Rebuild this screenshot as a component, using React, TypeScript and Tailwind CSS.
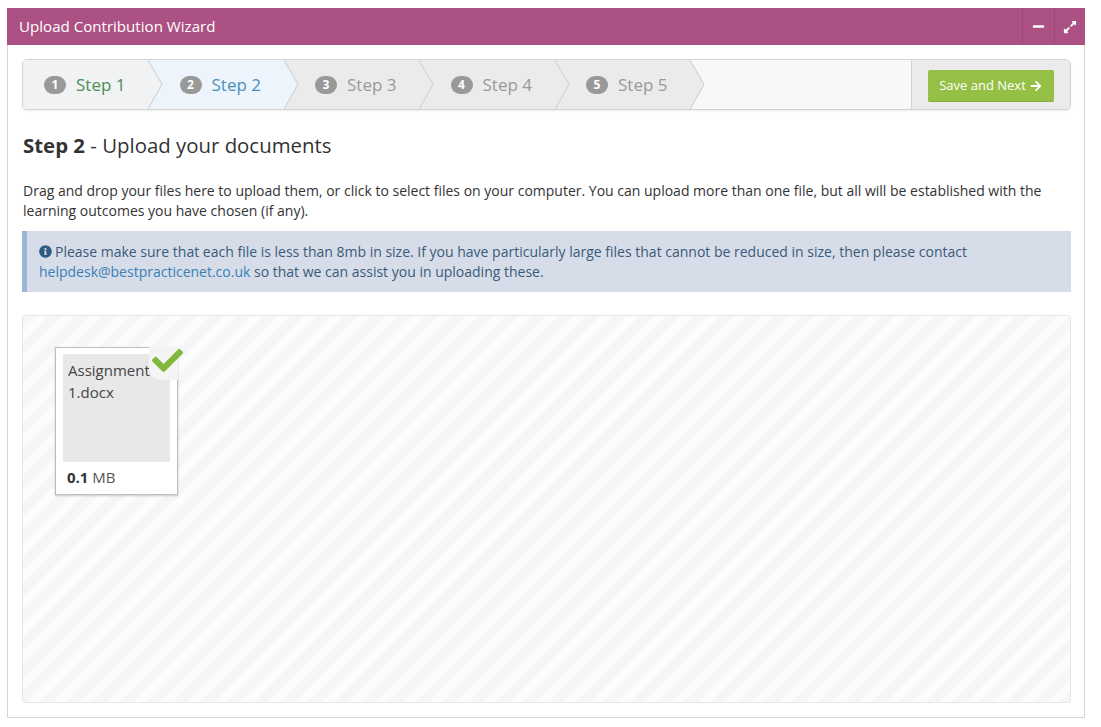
import { FaArrowRight, FaCheck, FaExpandAlt, FaInfoCircle, FaMinus } from "react-icons/fa";

const steps = [
  { n: 1, label: "Step 1", bg: "bg-[#f1f2f4]", text: "text-[#4b8f55]", fill: "#f1f2f4" },
  { n: 2, label: "Step 2", bg: "bg-[#eef4fb]", text: "text-[#4a90bd]", fill: "#eef4fb" },
  { n: 3, label: "Step 3", bg: "bg-[#ebebeb]", text: "text-[#999999]", fill: "#ebebeb" },
  { n: 4, label: "Step 4", bg: "bg-[#ebebeb]", text: "text-[#999999]", fill: "#ebebeb" },
  { n: 5, label: "Step 5", bg: "bg-[#ebebeb]", text: "text-[#999999]", fill: "#ebebeb" },
];

function StepItem({ n, label, bg, text, fill }: (typeof steps)[number]) {
  return (
    <div className={`relative flex h-full w-[135.5px] shrink-0 items-center pl-[31.5px] first:w-[125px] first:pl-[21px] ${bg}`}>
      <span className="mr-[10px] flex h-[18px] w-[22px] items-center justify-center rounded-full bg-[#999999] text-[12px] font-bold text-white">
        {n}
      </span>
      <span className={`text-[17px] leading-none ${text}`}>{label}</span>
      <svg className="absolute top-0 left-full z-10 h-full w-[15px]" viewBox="0 0 15 49" preserveAspectRatio="none">
        <path d="M0 0 L14 24.5 L0 49 Z" fill={fill} />
        <path d="M0 0 L14 24.5 L0 49" fill="none" stroke="#d4d4d4" strokeWidth="1.2" />
      </svg>
    </div>
  );
}

export default function App() {
  return (
    <div className="min-h-[727px] bg-white pt-2 pr-4 pl-[7px] font-['Open_Sans',sans-serif] text-[#333333]">
      <div className="h-[710px] w-[1078px] border-r border-b border-l border-[#d4d4d4]">
        <header className="-mx-px flex h-[37px] items-stretch justify-between bg-[#ab5183] text-white">
          <h1 className="self-center pl-3 text-[15.1px]">Upload Contribution Wizard</h1>
          <div className="flex">
            <button className="flex w-[32px] items-center justify-center border-l border-[#9c4776]" type="button">
              <FaMinus size={13} />
            </button>
            <button className="flex w-[31px] items-center justify-center border-l border-[#9c4776]" type="button">
              <FaExpandAlt size={14} />
            </button>
          </div>
        </header>

        <div className="pt-[14px] pr-[13.5px] pl-[14px]">
          <div className="flex h-[51px] overflow-hidden rounded-[5px] border border-[#d4d4d4] bg-[#f8f8f8] shadow-[0_1px_2px_rgba(0,0,0,0.08)]">
            <div className="flex flex-1">
              {steps.map((s) => (
                <StepItem key={s.n} {...s} />
              ))}
            </div>
            <div className="flex w-[159px] items-center justify-center border-l border-[#d4d4d4] bg-[#ebebeb]">
              <button
                className="mt-[3px] flex h-[32px] w-[126px] items-center justify-center gap-[4px] rounded-[2px] border-b border-[#86ad3d] bg-[#95bf45] text-[13px] text-white"
                type="button"
              >
                Save and Next <FaArrowRight size={12} />
              </button>
            </div>
          </div>

          <h2 className="mt-[20px] pl-px text-[20.4px] leading-[30px]">
            <strong>Step 2</strong> - Upload your documents
          </h2>

          <p className="mt-[21px] pl-px text-[14px] leading-[20px]">
            Drag and drop your files here to upload them, or click to select files on your computer. You can upload more
            than one file, but all will be established with the learning outcomes you have chosen (if any).
          </p>

          <div className="mt-[10px] h-[61px] border-l-[5px] border-[#9db6cf] bg-[#d6dde8] py-[11px] pl-[12px] text-[14px] leading-[20px] text-[#3a5a7a]">
            <FaInfoCircle className="mr-[3px] inline-block align-[-1px] text-[#2f5c85]" size={13} />
            Please make sure that each file is less than 8mb in size. If you have particularly large files that cannot be
            reduced in size, then please contact{" "}
            <a className="text-[#3a7fb5]" href="#">
              helpdesk@bestpracticenet.co.uk
            </a>{" "}
            so that we can assist you in uploading these.
          </div>

          <div className="mt-[23px] h-[388px] rounded-[3px] border border-[#e6e6e6] bg-[repeating-linear-gradient(135deg,#f5f6f8_0,#f5f6f8_8px,#fbfcfe_10px,#fbfcfe_17px,#f5f6f8_19px)] pt-[31px] pl-[32px]">
            <div className="relative h-[148px] w-[123px] border border-[#bdbdbd] bg-white px-[7px] pt-[6px] shadow-[0_1px_2px_rgba(0,0,0,0.2)]">
              <div className="h-[108px] overflow-hidden bg-[#e8e8e8] px-[5px] py-[5px] text-[15px] leading-[22px] text-[#444444]">
                Assignment 1.docx
              </div>
              <p className="mt-[7px] pl-[4px] text-[15px] leading-[17px] text-[#555555]">
                <strong className="text-[#333333]">0.1</strong> MB
              </p>
              <span className="absolute -top-px -right-px flex h-[33px] w-[29px] rounded-bl-[12px] bg-[#f4f4f4]">
                <FaCheck className="absolute -top-[2px] -right-[5px] text-[#7fb83d]" size={31} />
              </span>
            </div>
          </div>
        </div>
      </div>
    </div>
  );
}
